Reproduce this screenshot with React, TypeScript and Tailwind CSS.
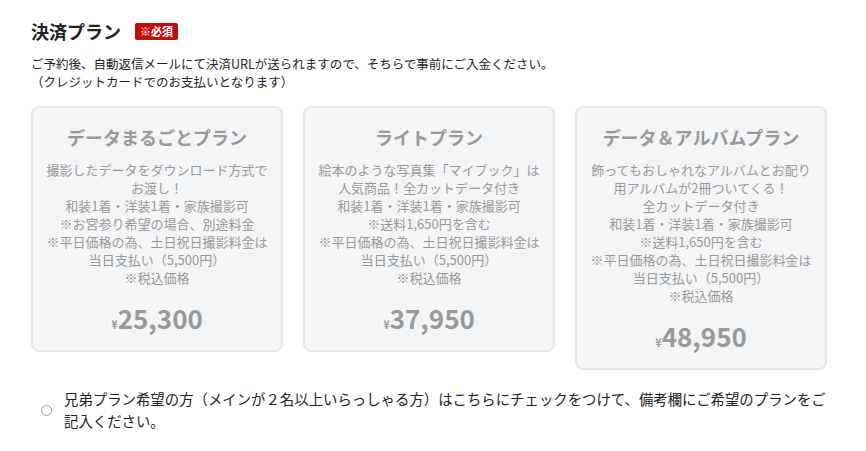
const plans = [
  {
    name: "データまるごとプラン",
    lines: [
      "撮影したデータをダウンロード方式で",
      "お渡し！",
      "和装1着・洋装1着・家族撮影可",
      "※お宮参り希望の場合、別途料金",
      "※平日価格の為、土日祝日撮影料金は",
      "当日支払い（5,500円）",
      "※税込価格",
    ],
    price: "25,300",
  },
  {
    name: "ライトプラン",
    lines: [
      "絵本のような写真集「マイブック」は",
      "人気商品！全カットデータ付き",
      "和装1着・洋装1着・家族撮影可",
      "※送料1,650円を含む",
      "※平日価格の為、土日祝日撮影料金は",
      "当日支払い（5,500円）",
      "※税込価格",
    ],
    price: "37,950",
  },
  {
    name: "データ＆アルバムプラン",
    lines: [
      "飾ってもおしゃれなアルバムとお配り",
      "用アルバムが2冊ついてくる！",
      "全カットデータ付き",
      "和装1着・洋装1着・家族撮影可",
      "※送料1,650円を含む",
      "※平日価格の為、土日祝日撮影料金は",
      "当日支払い（5,500円）",
      "※税込価格",
    ],
    price: "48,950",
  },
];

function PlanCard({ name, lines, price }: { name: string; lines: string[]; price: string }) {
  return (
    <div className="rounded-[8px] border-2 border-[#e6e6e6] bg-[#f4f5f7] px-3 pt-4 pb-[13px] text-center text-[#999]">
      <p className="text-[18px] font-bold leading-[27px]">{name}</p>
      <div className="mt-[10px] text-[13px] leading-[18px]">
        {lines.map((l, i) => (
          <p key={i}>{l}</p>
        ))}
      </div>
      <p className="mt-[12px] text-[26px] font-bold leading-[38px]">
        <span className="text-[11px] leading-none">¥</span>
        {price}
      </p>
    </div>
  );
}

export default function App() {
  return (
    <div className="w-[866px] h-[451px] bg-white pl-[31px] pr-[39px] pt-[19px] font-['Noto_Sans_CJK_JP','Noto_Sans',sans-serif] text-[#222]">
      {/* Heading */}
      <div className="flex items-center gap-[14px]">
        <h2 className="text-[18px] font-bold leading-[24px]">決済プラン</h2>
        <span className="rounded-[2px] bg-[#c30d0d] px-[5px] text-[11px] font-bold leading-[17px] text-white">
          ※必須
        </span>
      </div>

      <div className="mt-[12px] text-[12.5px] leading-[18px] text-[#222]">
        <p>ご予約後、自動返信メールにて決済URLが送られますので、そちらで事前にご入金ください。</p>
        <p>（クレジットカードでのお支払いとなります）</p>
      </div>

      {/* Plans */}
      <div className="mt-[15px] grid grid-cols-3 items-start gap-5">
        {plans.map((p) => (
          <PlanCard key={p.name} {...p} />
        ))}
      </div>

      {/* Sibling option */}
      <label className="mt-[18px] flex items-center gap-[12px] pl-[10px]">
        <span className="h-[11px] w-[11px] shrink-0 rounded-full border border-[#999] bg-white" />
        <span className="text-[14.4px] leading-[22px] text-[#222]">
          兄弟プラン希望の方（メインが２名以上いらっしゃる方）はこちらにチェックをつけて、備考欄にご希望のプランをご
          <br />
          記入ください。
        </span>
      </label>
    </div>
  );
}
